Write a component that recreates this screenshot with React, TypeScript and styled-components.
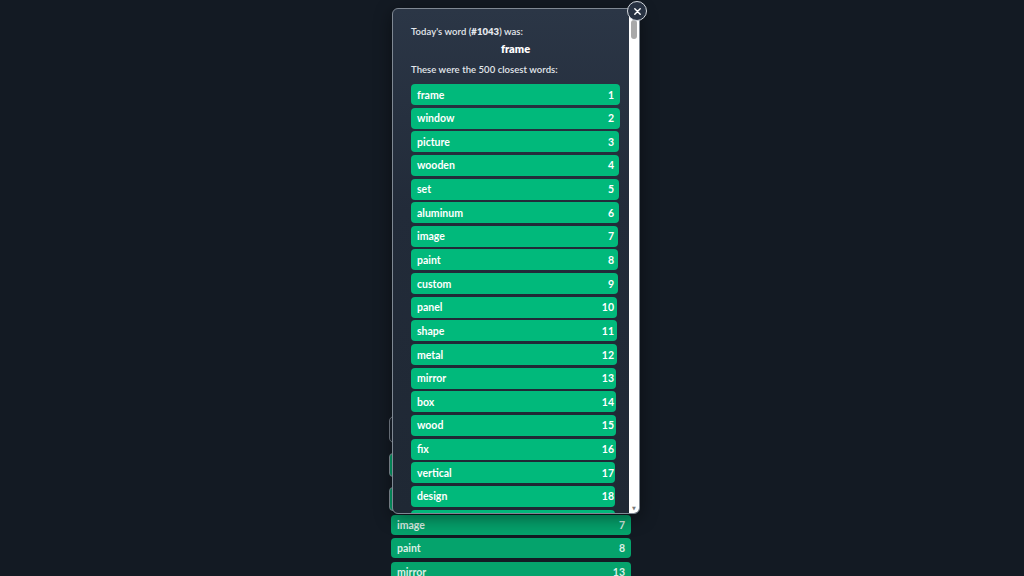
import React from 'react';
import styled, { createGlobalStyle } from 'styled-components';

const GlobalStyle = createGlobalStyle`
  html, body {
    margin: 0;
    padding: 0;
    background: #131a23;
    font-family: Lato, "Open Sans", "Liberation Sans", sans-serif;
  }
  #root {
    width: 1024px;
    height: 576px;
    overflow: hidden;
  }
`;

const Page = styled.div`
  position: relative;
  width: 1024px;
  height: 576px;
  background: #131a23;
  overflow: hidden;
`;

const GameColumn = styled.div`
  width: 244px;
  margin: 0 auto;
  padding-top: 416px;
  display: flex;
  flex-direction: column;
  gap: 10px;
  transform: translateX(-1px);
`;

const GuessInput = styled.div`
  height: 27px;
  box-sizing: border-box;
  border: 1px solid #7a828d;
  border-radius: 5px;
  background: #1a222d;
`;

const BackList = styled.div`
  display: flex;
  flex-direction: column;
  gap: 3.5px;
`;

const BackRow = styled.div<{ outlined?: boolean }>`
  height: ${({ outlined }) => (outlined ? '24px' : '20px')};
  box-sizing: border-box;
  margin: ${({ outlined }) => (outlined ? '0' : '0 2px')};
  border: ${({ outlined }) => (outlined ? '1.5px solid #8a929c' : 'none')};
  border-radius: 4px;
  background: #05a36c;
  color: #dcefe6;
  font-size: 10.5px;
  font-weight: 700;
  display: flex;
  align-items: center;
  justify-content: space-between;
  padding: 0 6px;
`;

const Modal = styled.div`
  position: absolute;
  left: 392px;
  top: 8px;
  width: 248px;
  height: 506px;
  box-sizing: border-box;
  border: 1px solid #7f8893;
  border-radius: 6px;
  background: linear-gradient(180deg, #2b3646 0%, #222b39 40%, #1f2834 100%);
  box-shadow: 0 4px 18px rgba(0, 0, 0, 0.45);
  display: flex;
  overflow: hidden;
`;

const ScrollArea = styled.div`
  flex: 1;
  min-width: 0;
  overflow: hidden;
`;

const ScrollTrack = styled.div`
  width: 10px;
  flex: none;
  background: #ffffff;
  display: flex;
  flex-direction: column;
`;

const ScrollArrow = styled.div`
  height: 10px;
  flex: none;
  display: flex;
  align-items: center;
  justify-content: center;
  color: #7a7a7a;
  font-size: 5px;
  line-height: 1;
  font-family: "DejaVu Sans", sans-serif;
`;

const ScrollThumb = styled.div`
  height: 19px;
  margin: 1px 2px;
  border-radius: 3px;
  background: #a9a9a9;
`;

const ScrollSpacer = styled.div`
  flex: 1;
`;

const Content = styled.div`
  padding: 17px 9px 20px 18px;
  color: #e3e7ec;
`;

const Line = styled.div`
  font-size: 9.5px;
  font-weight: 600;
  line-height: 12px;
  letter-spacing: 0.05px;

  b {
    font-weight: 800;
  }
`;

const Answer = styled.div`
  margin: 4px 0 8px;
  text-align: center;
  font-size: 11px;
  font-weight: 800;
  color: #ffffff;
  line-height: 14px;
`;

const WordList = styled.div`
  margin-top: 8px;
  display: flex;
  flex-direction: column;
  gap: 2.65px;
`;

const WordRow = styled.div`
  position: relative;
  height: 21px;
  border-radius: 4px;
  display: flex;
  align-items: center;
  justify-content: space-between;
  padding: 0 6px;
  color: #ffffff;
  font-size: 10.5px;
  font-weight: 700;
`;

const Bar = styled.div`
  position: absolute;
  left: 0;
  top: 0;
  bottom: 0;
  background: #01b97b;
  border-radius: 4px;
`;

const Label = styled.span`
  position: relative;
`;

const CloseButton = styled.button`
  position: absolute;
  left: 627px;
  top: 1px;
  width: 20px;
  height: 20px;
  box-sizing: border-box;
  border-radius: 50%;
  border: 1.5px solid #d3d8de;
  background: #283242;
  color: #ffffff;
  display: flex;
  align-items: center;
  justify-content: center;
  padding: 0;
  cursor: pointer;
`;

const words = [
  'frame', 'window', 'picture', 'wooden', 'set', 'aluminum', 'image', 'paint',
  'custom', 'panel', 'shape', 'metal', 'mirror', 'box', 'wood', 'fix',
  'vertical', 'design', 'glass', 'photo', 'door', 'structure', 'canvas', 'border',
];

const backRows = [
  { word: 'image', rank: 7 },
  { word: 'paint', rank: 8 },
  { word: 'mirror', rank: 13 },
];

const App: React.FC = () => {
  return (
    <Page>
      <GlobalStyle />
      <GameColumn>
        <GuessInput />
        <BackRow outlined>
          <span>wood</span>
          <span>15</span>
        </BackRow>
        <BackList>
          <BackRow outlined>
            <span>frame</span>
            <span>1</span>
          </BackRow>
          {backRows.map((r) => (
            <BackRow key={r.word}>
              <span>{r.word}</span>
              <span>{r.rank}</span>
            </BackRow>
          ))}
        </BackList>
      </GameColumn>

      <Modal>
        <ScrollArea>
          <Content>
            <Line>
              Today's word (<b>#1043</b>) was:
            </Line>
            <Answer>frame</Answer>
            <Line>These were the 500 closest words:</Line>
            <WordList>
              {words.map((w, i) => (
                <WordRow key={w}>
                  <Bar style={{ width: `${100 - i * 0.14}%` }} />
                  <Label>{w}</Label>
                  <Label>{i + 1}</Label>
                </WordRow>
              ))}
            </WordList>
          </Content>
        </ScrollArea>
        <ScrollTrack>
          <ScrollArrow>▲</ScrollArrow>
          <ScrollThumb />
          <ScrollSpacer />
          <ScrollArrow>▼</ScrollArrow>
        </ScrollTrack>
      </Modal>
      <CloseButton aria-label="Close">
        <svg width="9" height="9" viewBox="0 0 10 10">
          <path d="M2 2 L8 8 M8 2 L2 8" stroke="#ffffff" strokeWidth="1.6" strokeLinecap="round" />
        </svg>
      </CloseButton>
    </Page>
  );
};

export default App;
